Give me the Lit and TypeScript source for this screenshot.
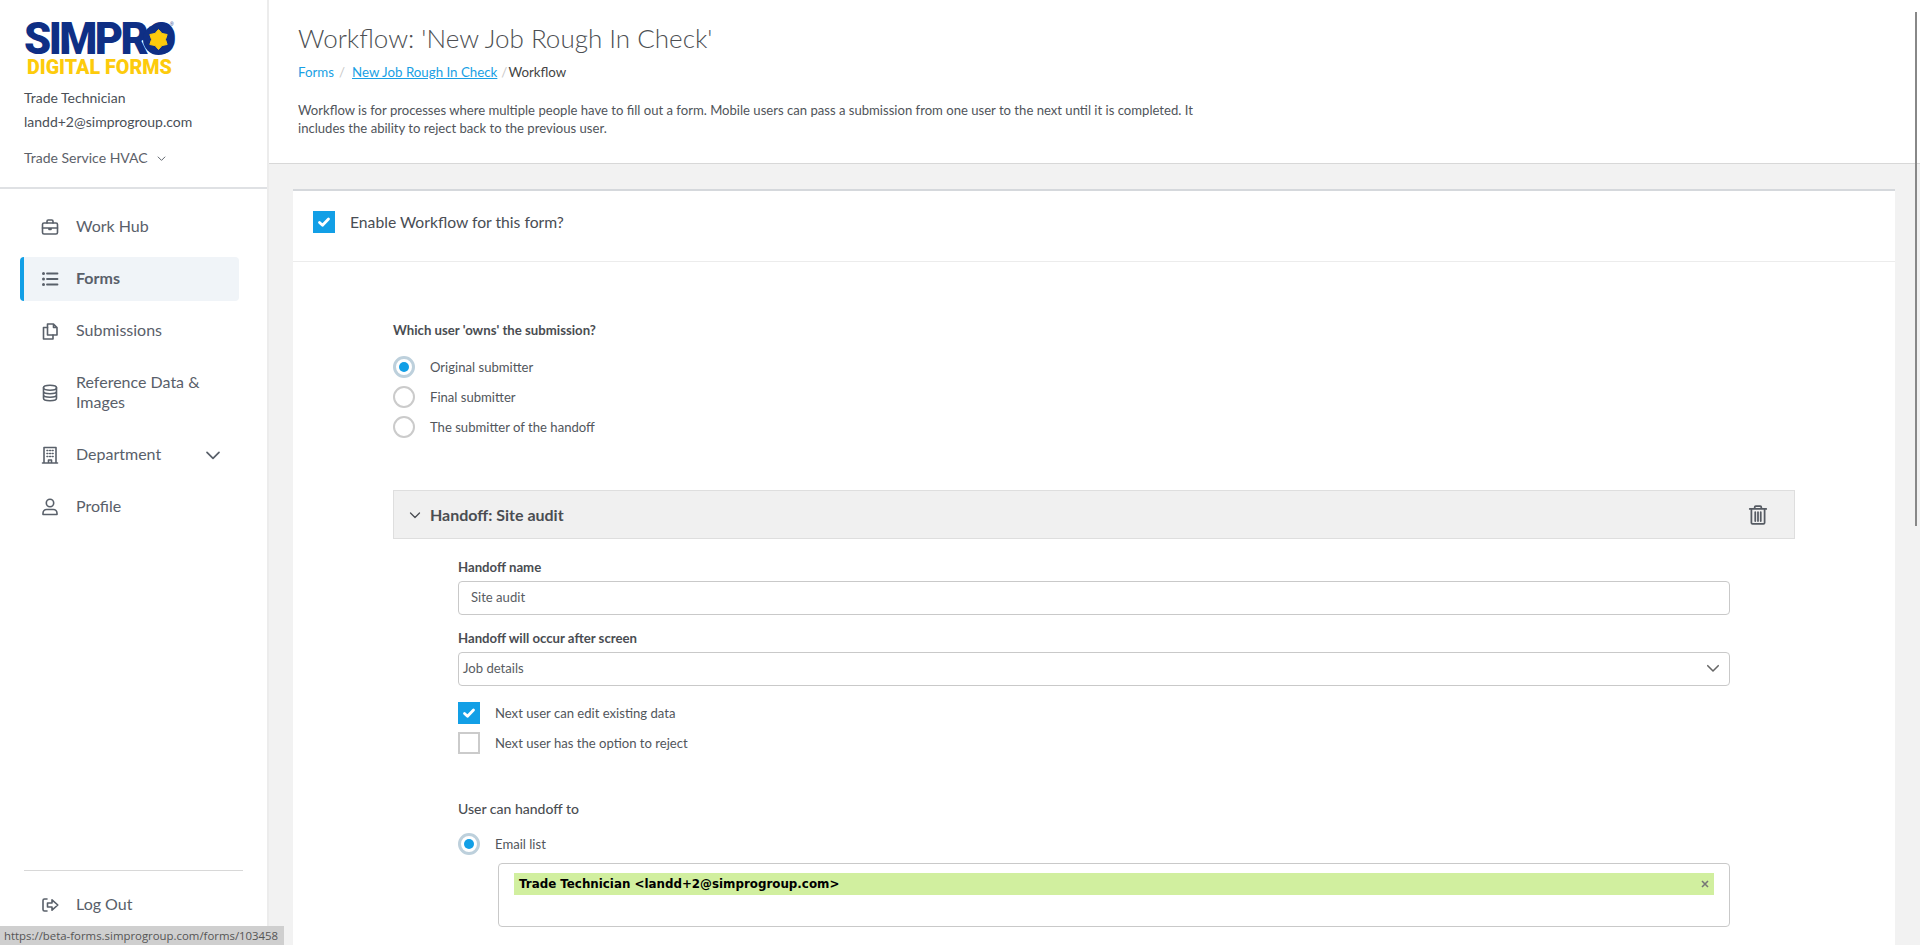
import { LitElement, html, css, svg } from "lit";
import { customElement } from "lit/decorators.js";

const ic = (body: unknown, size = 20) => html`<svg class="ic" width=${size} height=${size} viewBox="0 0 20 20" fill="none" stroke="currentColor" stroke-width="1.6" stroke-linecap="round" stroke-linejoin="round">${body}</svg>`;

const icons = {
  hub: svg`<rect x="2.5" y="6" width="15" height="11" rx="1.5"/><path d="M7 6V4.200C7 3.500 7.500 3 8.200 3h3.600c.7 0 1.200.5 1.200 1.200V6M2.500 11h15M9 11v1.500h2V11"/>`,
  list: svg`<path d="M7 4.500h10.500M7 10h10.500M7 15.500h10.500" stroke-width="1.800"/><circle cx="3.500" cy="4.500" r="1.500" fill="currentColor" stroke="none"/><circle cx="3.500" cy="10" r="1.500" fill="currentColor" stroke="none"/><circle cx="3.500" cy="15.500" r="1.500" fill="currentColor" stroke="none"/>`,
  subs: svg`<path d="M7.500 3h6l3.500 3.500V14H7.500zM13.500 3v3.500H17"/><path d="M7.500 6.500H3.500V18h9.500v-4"/>`,
  db: svg`<ellipse cx="10" cy="4.800" rx="6.500" ry="2.500"/><path d="M3.500 4.800v10.400c0 1.400 2.900 2.500 6.500 2.500s6.500-1.100 6.500-2.500V4.800M3.500 8.300c0 1.400 2.900 2.500 6.500 2.500s6.500-1.100 6.500-2.500M3.500 11.800c0 1.400 2.900 2.500 6.500 2.500s6.500-1.100 6.500-2.500"/>`,
  dept: svg`<path d="M4 18V2.500h12V18M2.500 18h15M8.500 18v-3h3v3" /><path d="M7 5.500h.8M9.700 5.500h.8M12.300 5.500h.8M7 8.500h.8M9.700 8.500h.8M12.300 8.500h.8M7 11.500h.8M9.700 11.500h.8M12.300 11.500h.8"/>`,
  user: svg`<circle cx="10" cy="6" r="3.700"/><path d="M3 17.500v-1.300c0-2 1.600-3.700 3.600-3.700h6.800c2 0 3.600 1.700 3.600 3.700v1.300z"/>`,
  logout: svg`<path d="M7 4H4.500C3.600 4 3 4.600 3 5.500v9c0 .9.6 1.500 1.500 1.500H7"/><path d="M7.500 8h4.500V4.800L17.800 10 12 15.200V12H7.500z"/>`,
  trash: svg`<path d="M2.500 4.500h15M7 4.500V3c0-.6.4-1 1-1h4c.6 0 1 .4 1 1v1.500M4 4.500V17c0 .6.4 1 1 1h10c.6 0 1-.4 1-1V4.500M7.500 7.500v8M10 7.500v8M12.500 7.500v8"/>`,
};

const chev = (size: number, cls = "") => html`<svg class=${cls} width=${size} height=${size} viewBox="0 0 12 12" fill="none" stroke="currentColor" stroke-width="1.300" stroke-linecap="round" stroke-linejoin="round"><path d="M1.500 4l4.500 4.500L10.500 4"/></svg>`;

const check = html`<svg width="14" height="14" viewBox="0 0 14 14" fill="none" stroke="#fff" stroke-width="2.800" stroke-linecap="round" stroke-linejoin="round"><path d="M2.500 7.500l3 2.800 6-6.300"/></svg>`;

@customElement("app-root")
export class AppRoot extends LitElement {
  static styles = css`
    :host { display: block; height: 945px; overflow: hidden; position: relative; font-family: Lato, "Open Sans", sans-serif; color: #4a4f57; background: #f2f2f2; }
    * { box-sizing: border-box; }
    .page { display: flex; height: 945px; }
    .side { width: 269px; flex: none; background: #fff; border-right: 2px solid #ececec; display: flex; flex-direction: column; height: 945px; }
    .side-top { padding: 24px 24px 0; height: 189px; border-bottom: 2px solid #dfe1e4; }
    .logo { position: relative; width: 150px; height: 52px; }
    .logo .a { font: 900 43.5px/32px Roboto, sans-serif; letter-spacing: -2.6px; color: #0f2f85; display: block; height: 32px; }
    .logo .b { font: 900 19.7px/16px Roboto, sans-serif; letter-spacing: 0; color: #fdcb0c; display: block; margin: 4px 0 0 3px; white-space: nowrap; }
    .disc { position: absolute; left: 119px; top: 0; width: 31px; height: 31px; }
    .reg { position: absolute; left: 146px; top: -3px; font: 5px/6px "Liberation Sans", sans-serif; color: #0f2f85; }
    .tinfo { font-size: 14px; line-height: 24px; margin-top: 10px; color: #4a4f57; }
    .org { display: flex; align-items: center; gap: 9px; margin-top: 12px; font-size: 14px; line-height: 24px; color: #5c6169; }
    nav { padding: 16px 20px 0; display: flex; flex-direction: column; gap: 8px; }
    .item { display: flex; align-items: center; width: 219px; min-height: 44px; padding: 0 0 0 20px; font-size: 16px; line-height: 20px; color: #59606a; border-radius: 4px; }
    .item.tall { min-height: 64px; }
    .item.on { background: #f0f4f8; border-left: 4px solid #129fe6; padding-left: 16px; font-weight: 700; }
    .item .ic { flex: none; margin-right: 16px; }
    .item .t { flex: 1; padding-bottom: 3px; }
    .item .dch { margin-right: 18px; flex: none; }
    .bottom { margin: auto 24px 0; border-top: 1px solid #d8d8d8; height: 75px; }
    .bottom .item { margin: 12px 0 0 -4px; width: 200px; }
    main { flex: 1; min-width: 0; display: flex; flex-direction: column; }
    header { background: #fff; border-bottom: 1px solid #d8d8d8; height: 164px; padding: 20px 24px 0 29px; flex: none; }
    h1 { margin: 0; font-size: 26px; line-height: 36px; font-weight: 300; color: #4d4f53; }
    .crumbs { display: flex; align-items: center; font-size: 13.300px; line-height: 20px; margin-top: 6px; color: #444; }
    .crumbs a { color: #199fe4; }
    .crumbs a.u { text-decoration: underline; margin-left: 4px; }
    .sep { color: #c8c8c8; margin: 0 3px 0 5px; }
    .sep.last { margin: 0 1px 0 4px; }
    .desc { margin: 19px 0 0; width: 920px; font-size: 13.100px; line-height: 18px; color: #50545a; }
    .content { padding: 25px 25px 0 24px; flex: 1; }
    .card { width: 1602px; background: #fff; border-top: 2px solid #d5d8dc; height: 800px; }
    .enable { display: flex; align-items: center; height: 71px; padding: 0 0 9px 20px; border-bottom: 1px solid #ececec; font-size: 15.700px; color: #494d54; }
    .box { width: 22px; height: 22px; flex: none; display: flex; align-items: center; justify-content: center; background: #129fe6; }
    .box.off { background: #fff; border: 2px solid #cbcbcb; }
    .enable .box { margin-right: 15px; }
    .form { padding: 58px 100px 0; }
    .lab { font-size: 13.200px; line-height: 20px; font-weight: 700; color: #4a4d52; }
    .opts { margin-top: 16px; display: flex; flex-direction: column; gap: 8px; }
    .opt { display: flex; align-items: center; height: 22px; font-size: 13.100px; color: #52565c; }
    .radio { width: 22px; height: 22px; border-radius: 50%; border: 2px solid #cbcbcb; margin-right: 15px; flex: none; background: #fff; display: flex; align-items: center; justify-content: center; }
    .radio.on { border: 3px solid #bdd0dc; }
    .radio.on::after { content: ""; width: 10px; height: 10px; border-radius: 50%; background: #129fe6; }
    .hand { margin-top: 52px; height: 49px; background: #f0f0f0; border: 1px solid #dedede; display: flex; align-items: center; padding: 0 25px 0 15px; color: #4a4d52; }
    .hand .n { flex: 1; margin-left: 9px; font-size: 16px; font-weight: 700; }
    .hand svg.ic { color: #565b63; }
    .sub { padding: 0 0 0 65px; width: 1337px; }
    .sub .lab.first { margin-top: 18px; }
    .field { height: 34px; margin-top: 4px; border: 1px solid #c9c9c9; border-radius: 4px; display: flex; align-items: center; font-size: 13.100px; padding: 0 12px 2px; color: #585c62; margin-bottom: 13px; background: #fff; }
    .field.sel { padding: 0 9px 2px 4px; justify-content: space-between; }
    .field.sel svg { color: #666; }
    .checks { display: flex; flex-direction: column; gap: 8px; margin-top: 16px; }
    .checks .box { margin-right: 15px; }
    .lab2 { font-size: 14px; font-weight: 500; line-height: 20px; margin-top: 45px; color: #4a4d52; }
    .opts2 { margin-top: 14px; }
    .tags { margin: 8px 0 0 40px; height: 64px; border: 1px solid #c9c9c9; border-radius: 4px; padding: 9px 15px; }
    .chip { height: 22px; background: #d1ef9f; display: flex; align-items: center; justify-content: space-between; padding: 0 5px 0 5px; font: 700 11.870px/22px "DejaVu Sans", sans-serif; color: #000; }
    .chip svg { color: #777; }
    .status { position: absolute; left: 0; bottom: 0; width: 284px; height: 19px; background: #cfcfcf; color: #555; font: 11.400px/19px "Open Sans", sans-serif; padding-left: 4px; white-space: nowrap; overflow: hidden; }
    .thumb { position: absolute; left: 1915px; top: 12px; width: 2px; height: 514px; background: #888; }
  `;

  render() {
    return html`
      <div class="page">
        <aside class="side">
          <div class="side-top">
            <div class="logo">
              <span class="a">SIMPRO</span>
              <svg class="disc" viewBox="0 0 31 31"><circle cx="15.500" cy="15.500" r="15.500" fill="#0f2f85"/><path fill="#fdcb0c" stroke="#fdcb0c" stroke-width="1" stroke-linejoin="round" d="M15.500 5.500L19 9.440 24.160 10.500 22.500 15.500 24.160 20.500 19 21.560 15.500 25.500 12 21.560 6.840 20.500 8.500 15.500 6.840 10.500 12 9.440z"/></svg>
              <span class="reg">®</span>
              <span class="b">DIGITAL FORMS</span>
            </div>
            <div class="tinfo">Trade Technician<br />landd+2@simprogroup.com</div>
            <div class="org">Trade Service HVAC ${chev(9)}</div>
          </div>
          <nav>
            <div class="item">${ic(icons.hub)}<span class="t">Work Hub</span></div>
            <div class="item on">${ic(icons.list)}<span class="t">Forms</span></div>
            <div class="item">${ic(icons.subs)}<span class="t">Submissions</span></div>
            <div class="item tall">${ic(icons.db)}<span class="t">Reference Data &amp;<br />Images</span></div>
            <div class="item">${ic(icons.dept)}<span class="t">Department</span>${chev(16, "dch")}</div>
            <div class="item">${ic(icons.user)}<span class="t">Profile</span></div>
          </nav>
          <div class="bottom">
            <div class="item">${ic(icons.logout)}<span class="t">Log Out</span></div>
          </div>
        </aside>
        <main>
          <header>
            <h1>Workflow: 'New Job Rough In Check'</h1>
            <div class="crumbs"><a>Forms</a><span class="sep">/</span><a class="u">New Job Rough In Check</a><span class="sep last">/</span><span>Workflow</span></div>
            <p class="desc">Workflow is for processes where multiple people have to fill out a form. Mobile users can pass a submission from one user to the next until it is completed. It includes the ability to reject back to the previous user.</p>
          </header>
          <div class="content">
            <section class="card">
              <div class="enable"><span class="box">${check}</span>Enable Workflow for this form?</div>
              <div class="form">
                <div class="lab">Which user 'owns' the submission?</div>
                <div class="opts">
                  <div class="opt"><span class="radio on"></span>Original submitter</div>
                  <div class="opt"><span class="radio"></span>Final submitter</div>
                  <div class="opt"><span class="radio"></span>The submitter of the handoff</div>
                </div>
                <div class="hand">${chev(12)}<span class="n">Handoff: Site audit</span>${ic(icons.trash, 22)}</div>
                <div class="sub">
                  <div class="lab first">Handoff name</div>
                  <div class="field">Site audit</div>
                  <div class="lab">Handoff will occur after screen</div>
                  <div class="field sel">Job details ${chev(14)}</div>
                  <div class="checks">
                    <div class="opt"><span class="box">${check}</span>Next user can edit existing data</div>
                    <div class="opt"><span class="box off"></span>Next user has the option to reject</div>
                  </div>
                  <div class="lab2">User can handoff to</div>
                  <div class="opts2"><div class="opt"><span class="radio on"></span>Email list</div></div>
                  <div class="tags"><div class="chip">Trade Technician &lt;landd+2@simprogroup.com&gt;<svg width="8" height="8" viewBox="0 0 8 8" stroke="currentColor" stroke-width="1.600"><path d="M1 1l6 6M7 1L1 7"/></svg></div></div>
                </div>
              </div>
            </section>
          </div>
        </main>
      </div>
      <div class="thumb"></div>
      <div class="status">https://beta-forms.simprogroup.com/forms/103458</div>
    `;
  }
}
